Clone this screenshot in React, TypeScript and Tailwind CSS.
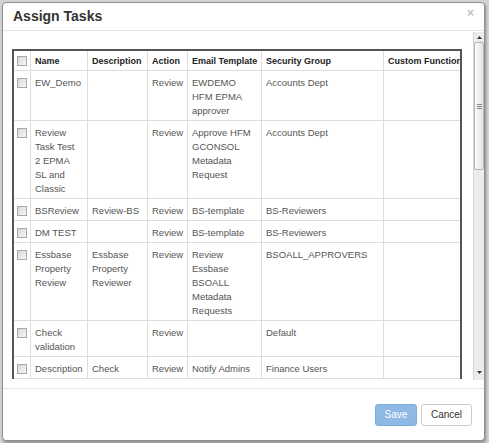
import React from "react";

type Row = { name: string[]; desc: string[]; action: string; email: string[]; group: string };

const rows: Row[] = [
  { name: ["EW_Demo"], desc: [], action: "Review", email: ["EWDEMO", "HFM EPMA", "approver"], group: "Accounts Dept" },
  { name: ["Review", "Task Test", "2 EPMA", "SL and", "Classic"], desc: [], action: "Review", email: ["Approve HFM", "GCONSOL", "Metadata", "Request"], group: "Accounts Dept" },
  { name: ["BSReview"], desc: ["Review-BS"], action: "Review", email: ["BS-template"], group: "BS-Reviewers" },
  { name: ["DM TEST"], desc: [], action: "Review", email: ["BS-template"], group: "BS-Reviewers" },
  { name: ["Essbase", "Property", "Review"], desc: ["Essbase", "Property", "Reviewer"], action: "Review", email: ["Review", "Essbase", "BSOALL", "Metadata", "Requests"], group: "BSOALL_APPROVERS" },
  { name: ["Check", "validation"], desc: [], action: "Review", email: [], group: "Default" },
  { name: ["Description"], desc: ["Check"], action: "Review", email: ["Notify Admins"], group: "Finance Users" },
];

function Check() {
  return (
    <div className="w-[10px] h-[10px] border border-[#a8a8a8] bg-gradient-to-br from-[#d8d8d8] to-[#f7f7f7]" />
  );
}

function Lines({ lines }: { lines: string[] }) {
  return (
    <>
      {lines.map((l, i) => (
        <div key={i} className="whitespace-nowrap">{l}</div>
      ))}
    </>
  );
}

const th = "border-r border-b border-[#dddddd] pl-[4px] pt-[3px] pb-[2px] text-left align-top font-bold text-[9px] leading-[14px] text-[#222] whitespace-nowrap overflow-hidden";
const td = "border-r border-b border-[#dddddd] pl-[4px] pt-[5px] pb-[2px] align-top text-[9.5px] leading-[14px] text-[#555] overflow-hidden";

export default function App() {
  return (
    <div
      className="w-[489px] h-[443px] bg-[#d4d4d4] pl-[2px] pt-[2px] overflow-hidden"
      style={{ fontFamily: '"Liberation Sans", Arial, sans-serif' }}
    >
      <div className="relative w-[483px] h-[439px] bg-white border border-[#8f8f8f] rounded-[4px] shadow-[1px_2px_3px_rgba(0,0,0,0.35)] flex flex-col overflow-hidden">
        <div className="h-[28px] shrink-0 border-b border-[#e5e5e5] pl-[10px] pt-[4px]">
          <div className="text-[14px] leading-[18px] font-bold text-[#333]">Assign Tasks</div>
        </div>
        <span className="absolute right-[10px] top-[4px] text-[12px] leading-[12px] font-bold text-[#c4c4c4]">×</span>

        <div className="h-[357px] shrink-0 flex flex-col">
          <div className="h-[350px] flex">
            <div className="pl-[9px] pt-[18px] pr-[10px]">
              <div className="w-[450px] h-[330px] overflow-hidden border-l-2 border-t-2 border-r-2 border-[#555]">
                <table className="table-fixed border-separate border-spacing-0 w-[470px]">
                  <colgroup>
                    <col className="w-[17px]" />
                    <col className="w-[57px]" />
                    <col className="w-[60px]" />
                    <col className="w-[40px]" />
                    <col className="w-[74px]" />
                    <col className="w-[122px]" />
                    <col className="w-[100px]" />
                  </colgroup>
                  <thead>
                    <tr>
                      <th className="border-r border-b border-[#dddddd] pl-[3px] pt-[5px] pb-[2px] align-top">
                        <Check />
                      </th>
                      <th className={th}>Name</th>
                      <th className={th}>Description</th>
                      <th className={th}>Action</th>
                      <th className={th}>Email Template</th>
                      <th className={th}>Security Group</th>
                      <th className={th}>Custom Function</th>
                    </tr>
                  </thead>
                  <tbody>
                    {rows.map((r, i) => (
                      <tr key={i}>
                        <td className="border-r border-b border-[#dddddd] pl-[3px] pt-[7px] pb-[2px] align-top">
                          <Check />
                        </td>
                        <td className={td}><Lines lines={r.name} /></td>
                        <td className={td}><Lines lines={r.desc} /></td>
                        <td className={td}>{r.action}</td>
                        <td className={td}><Lines lines={r.email} /></td>
                        <td className={td}><span className="whitespace-nowrap">{r.group}</span></td>
                        <td className={td}></td>
                      </tr>
                    ))}
                  </tbody>
                </table>
              </div>
            </div>
            <div className="w-[12px] h-[348px] mt-[1px] ml-[1px] bg-[#ececec] border-l border-[#d6d6d6] flex flex-col">
              <div className="h-[10px] flex items-center justify-center">
                <svg width="5" height="3" viewBox="0 0 5 3"><polygon points="2.5,0 5,3 0,3" fill="#333" /></svg>
              </div>
              <div className="h-[128px] bg-gradient-to-r from-[#fafafa] to-[#e4e4e4] border border-[#b5b5b5] rounded-[2px] flex items-center justify-center">
                <svg width="5" height="5" viewBox="0 0 5 5">
                  <rect x="0" y="0" width="5" height="1" fill="#888" />
                  <rect x="0" y="2" width="5" height="1" fill="#888" />
                  <rect x="0" y="4" width="5" height="1" fill="#888" />
                </svg>
              </div>
              <div className="flex-1" />
              <div className="h-[10px] mb-[3px] flex items-center justify-center">
                <svg width="5" height="3" viewBox="0 0 5 3"><polygon points="0,0 5,0 2.5,3" fill="#333" /></svg>
              </div>
            </div>
          </div>
        </div>

        <div className="flex-1 border-t border-[#e5e5e5] flex justify-end items-start gap-[4px] pt-[15px] pr-[12px]">
          <button className="w-[42px] h-[22px] rounded-[3px] bg-[#8db9e3] border border-[#7eaedb] text-white text-[10px] leading-[20px]">
            Save
          </button>
          <button className="w-[51px] h-[22px] rounded-[3px] bg-white border border-[#cccccc] text-[#333] text-[10px] leading-[20px]">
            Cancel
          </button>
        </div>
      </div>
    </div>
  );
}
